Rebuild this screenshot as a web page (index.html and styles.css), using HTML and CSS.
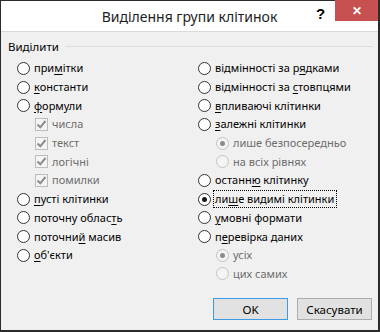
FILE: index.html
```html
<!DOCTYPE html>
<html lang="uk">
<head>
  <meta charset="UTF-8">
  <title>Виділення групи клітинок</title>
  <link rel="stylesheet" href="styles.css">
</head>
<body>
  <div class="window">
    <div class="titlebar">
      <span class="title">Виділення групи клітинок</span>
      <span class="help">?</span>
      <span class="close">✕</span>
    </div>
    <div class="content">
      <div class="group-head">
        <span>Виділити</span>
        <span class="rule"></span>
      </div>
      <div class="columns">
        <div class="col">
          <div class="opt"><span class="radio"></span><span class="label">при<u>м</u>ітки</span></div>
          <div class="opt"><span class="radio"></span><span class="label"><u>к</u>онстанти</span></div>
          <div class="opt"><span class="radio"></span><span class="label"><u>ф</u>ормули</span></div>
          <div class="opt sub disabled"><span class="check"><svg width="11" height="11" viewBox="0 0 11 11"><polyline points="1.5,5.5 4.3,8.3 9.5,2" fill="none" stroke="#8c8c8c" stroke-width="2"/></svg></span><span class="label">числа</span></div>
          <div class="opt sub disabled"><span class="check"><svg width="11" height="11" viewBox="0 0 11 11"><polyline points="1.5,5.5 4.3,8.3 9.5,2" fill="none" stroke="#8c8c8c" stroke-width="2"/></svg></span><span class="label">текст</span></div>
          <div class="opt sub disabled"><span class="check"><svg width="11" height="11" viewBox="0 0 11 11"><polyline points="1.5,5.5 4.3,8.3 9.5,2" fill="none" stroke="#8c8c8c" stroke-width="2"/></svg></span><span class="label">логічні</span></div>
          <div class="opt sub disabled"><span class="check"><svg width="11" height="11" viewBox="0 0 11 11"><polyline points="1.5,5.5 4.3,8.3 9.5,2" fill="none" stroke="#8c8c8c" stroke-width="2"/></svg></span><span class="label">помилки</span></div>
          <div class="opt"><span class="radio"></span><span class="label"><u>п</u>усті клітинки</span></div>
          <div class="opt"><span class="radio"></span><span class="label">поточну облас<u>т</u>ь</span></div>
          <div class="opt"><span class="radio"></span><span class="label">поточни<u>й</u> масив</span></div>
          <div class="opt"><span class="radio"></span><span class="label"><u>о</u>б'єкти</span></div>
        </div>
        <div class="col">
          <div class="opt"><span class="radio"></span><span class="label">відмінності за р<u>я</u>дками</span></div>
          <div class="opt"><span class="radio"></span><span class="label">відмінності за <u>с</u>товпцями</span></div>
          <div class="opt"><span class="radio"></span><span class="label"><u>в</u>пливаючі клітинки</span></div>
          <div class="opt"><span class="radio"></span><span class="label"><u>з</u>алежні клітинки</span></div>
          <div class="opt sub disabled"><span class="radio on"></span><span class="label">лише безпосередньо</span></div>
          <div class="opt sub disabled"><span class="radio"></span><span class="label">на всіх рівнях</span></div>
          <div class="opt"><span class="radio"></span><span class="label">останн<u>ю</u> клітинку</span></div>
          <div class="opt"><span class="radio on"></span><span class="label focus">ли<u>ш</u>е видимі клітинки</span></div>
          <div class="opt"><span class="radio"></span><span class="label"><u>у</u>мовні формати</span></div>
          <div class="opt"><span class="radio"></span><span class="label">п<u>е</u>ревірка даних</span></div>
          <div class="opt sub disabled"><span class="radio on"></span><span class="label">усіх</span></div>
          <div class="opt sub disabled"><span class="radio"></span><span class="label">цих самих</span></div>
        </div>
      </div>
      <div class="buttons">
        <button class="btn default">OK</button>
        <button class="btn">Скасувати</button>
      </div>
    </div>
  </div>
</body>
</html>
```

FILE: styles.css
```css
body {
  margin: 0;
  font-family: 'Noto Sans', 'Open Sans', sans-serif;
  font-size: 11px;
  color: #000;
  background: #2b2b2b;
}

.window {
  box-sizing: border-box;
  width: 380px;
  height: 332px;
  border-left: 1px solid #2b2b2b;
  border-top: 1px solid #2b2b2b;
  border-right: 2px solid #2b2b2b;
  border-bottom: 2px solid #2b2b2b;
  background: #f0f0f0;
  display: flex;
  flex-direction: column;
}

.titlebar {
  position: relative;
  height: 30px;
  background: #fff;
  border-bottom: 1px solid #d9d9d9;
  display: flex;
  justify-content: center;
  align-items: center;
  flex-shrink: 0;
}

.title {
  font-size: 14px;
  color: #1e1e1e;
  padding-top: 1px;
}

.help {
  position: absolute;
  left: 315px;
  top: 4px;
  font-size: 15px;
  font-weight: bold;
  font-family: 'Liberation Sans', sans-serif;
}

.close {
  position: absolute;
  right: 0;
  top: -1px;
  width: 43px;
  height: 21px;
  background: #c75050;
  color: #fff;
  font-size: 12px;
  font-weight: bold;
  display: flex;
  justify-content: center;
  align-items: center;
}

.content {
  padding: 6px 0 0 7px;
  display: flex;
  flex-direction: column;
}

.group-head {
  display: flex;
  align-items: center;
  height: 16px;
  padding-right: 5px;
  font-size: 11.5px;
}

.group-head .rule {
  flex: 1;
  height: 1px;
  background: #dcdcdc;
  margin-left: 7px;
}

.columns {
  display: grid;
  grid-template-columns: 181px 1fr;
  padding: 5px 0 0 9px;
}

.opt {
  display: flex;
  align-items: center;
  height: 18.7px;
}

.opt.sub {
  padding-left: 18px;
}

.radio {
  width: 11px;
  height: 11px;
  border: 1px solid #333;
  border-radius: 50%;
  background: #fff;
  display: flex;
  justify-content: center;
  align-items: center;
  flex-shrink: 0;
}

.radio.on::after {
  content: "";
  width: 5px;
  height: 5px;
  border-radius: 50%;
  background: #1a1a1a;
}

.check {
  width: 11px;
  height: 11px;
  border: 1px solid #bcbcbc;
  background: #f4f4f4;
  display: flex;
  justify-content: center;
  align-items: center;
  flex-shrink: 0;
}

.label {
  margin-left: 2px;
  padding: 0 2px 1px 1px;
  border: 1px dotted transparent;
  white-space: nowrap;
}

.label.focus {
  border-color: #000;
}

.label u {
  text-underline-offset: 2px;
}

.disabled .label {
  color: #6d6d6d;
}

.disabled .radio {
  border-color: #c3c3c3;
  background: #f4f4f4;
}

.disabled .radio.on::after {
  background: #8c8c8c;
}

.buttons {
  display: flex;
  justify-content: flex-end;
  gap: 9px;
  padding: 15px 6px 0 0;
}

.btn {
  width: 75px;
  height: 22px;
  background: #e1e1e1;
  border: 1px solid #adadad;
  font-family: inherit;
  font-size: 11.5px;
  color: #000;
  padding: 0;
}

.btn.default {
  border-color: #3c9ae6;
}
```
